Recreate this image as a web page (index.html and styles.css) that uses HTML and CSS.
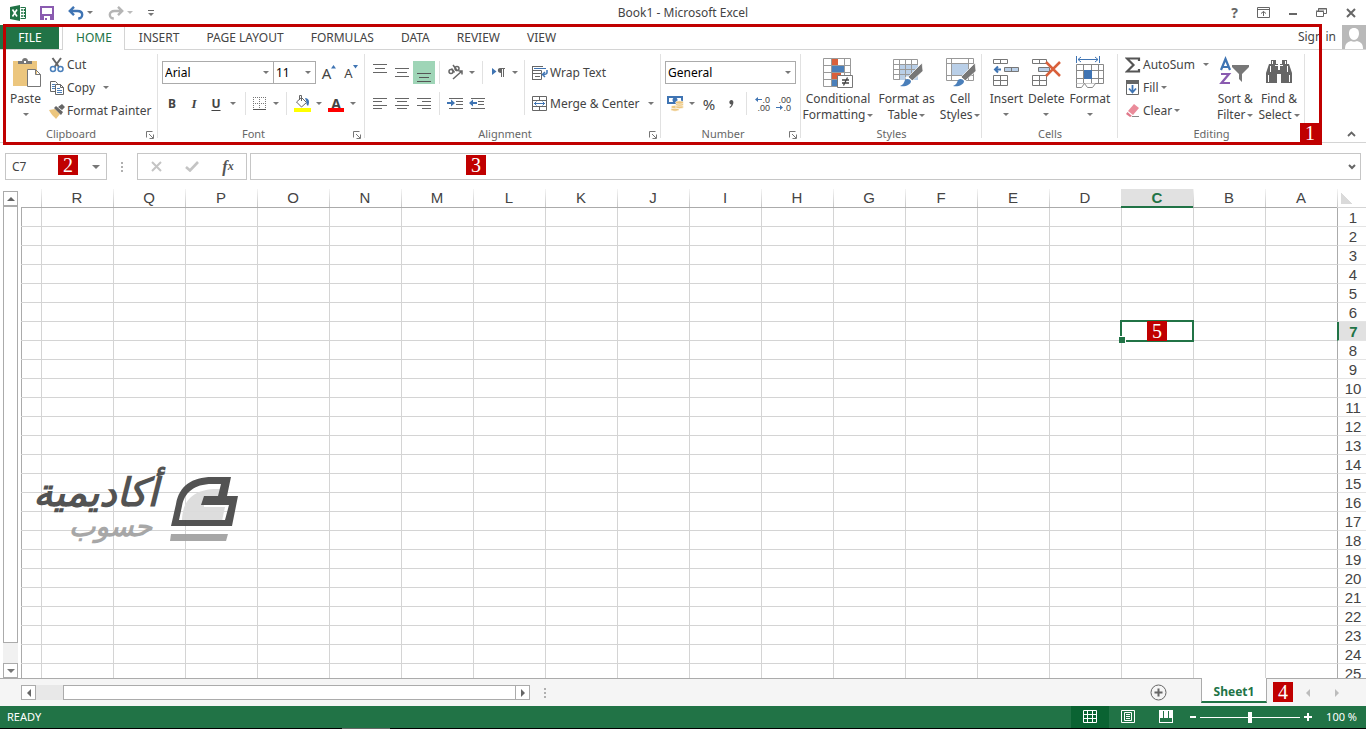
FILE: index.html
```html
<!DOCTYPE html>
<html lang="en">
<head>
<meta charset="utf-8">
<title>Book1 - Microsoft Excel</title>
<link rel="stylesheet" href="styles.css">
</head>
<body>
<header class="titlebar">
  <div class="quick">
    <svg class="app-icon" width="17" height="16" viewBox="0 0 17 16"><path fill="#217346" d="M0 2 10 0v16L0 14z"/><path fill="#fff" stroke="#217346" d="M10.500 2.500h5v11h-5"/><path stroke="#217346" stroke-dasharray="2 1" d="M12 4v8M14.500 4v8" stroke-width="1.500"/><path stroke="#fff" stroke-width="1.600" d="m2.500 4.500 4.500 7M7 4.500l-4.500 7"/></svg>
    <button class="q-btn q-save" aria-label="Save"><svg width="14" height="14" viewBox="0 0 14 14"><path fill="#8a5bb0" d="M0 0h14v14H0z"/><path fill="#fff" d="M2 2h10v6H2zM4 10h6v4H7v-2H5v2H4z"/></svg></button>
    <button class="q-btn" aria-label="Undo"><svg width="16" height="14" viewBox="0 0 16 14" fill="none" stroke="#3f74b3" stroke-width="2.400"><path d="M6 .8 1.800 5 6 9.200M2 5h7.500c3 0 4.700 1.600 4.700 3.800s-2 3.700-4 3.700"/></svg></button>
    <button class="drop" aria-label="Undo list"><i class="caret"></i></button>
    <button class="q-btn q-redo" aria-label="Redo"><svg width="16" height="14" viewBox="0 0 16 14" fill="none" stroke="#b5b5b5" stroke-width="2.400"><path d="M10 .8 14.200 5 10 9.200M14 5H6.500C3.500 5 1.800 6.600 1.800 8.800s2 3.700 4 3.700"/></svg></button>
    <button class="drop faded" aria-label="Redo list"><i class="caret"></i></button>
    <button class="drop q-custom" aria-label="Customize toolbar"><i class="dash"></i><i class="caret"></i></button>
  </div>
  <h1 class="title">Book1 - Microsoft Excel</h1>
  <div class="window-btns">
    <button aria-label="Help" class="help">?</button>
    <button aria-label="Ribbon display options"><svg width="13" height="11" viewBox="0 0 13 11" fill="none" stroke="#666"><path d="M.5.5h12v10H.5zM0 2.500h13M6.500 9V4.500M4 6.500l2.500-2L9 6.500"/></svg></button>
    <button aria-label="Minimize"><svg width="10" height="10"><path fill="#666" d="M1 5h8v2H1z"/></svg></button>
    <button aria-label="Restore"><svg width="11" height="9" viewBox="0 0 11 9" fill="none" stroke="#666"><path d="M.5 3.500h7v5h-7zM0 3h8M2.500 3V.5h8v5H8M2 1h9"/></svg></button>
    <button aria-label="Close"><svg width="10" height="10" viewBox="0 0 10 10" stroke="#666" stroke-width="2"><path d="m1 1 8 8M9 1 1 9"/></svg></button>
  </div>
</header>

<section class="ribbon">
  <nav class="tabs">
    <a class="tab file" href="#file">FILE</a>
    <a class="tab active" href="#home">HOME</a>
    <a class="tab" href="#insert">INSERT</a>
    <a class="tab" href="#layout">PAGE LAYOUT</a>
    <a class="tab" href="#formulas">FORMULAS</a>
    <a class="tab" href="#data">DATA</a>
    <a class="tab" href="#review">REVIEW</a>
    <a class="tab" href="#view">VIEW</a>
    <a class="signin" href="#signin">Sign in<svg width="24" height="24" viewBox="0 0 24 24"><path fill="#b9b9b9" d="M0 0h24v24H0z"/><path fill="#fff" d="M12 3c3.500 0 5 2.300 5 5.500S15 15 12 15s-5-3.300-5-6.500S8.500 3 12 3zM3 24c0-5 2-7 6-8 2 1 4 1 6 0 4 1 6 3 6 8z"/></svg></a>
  </nav>

  <div class="groups">
    <div class="group g-clipboard">
      <div class="body">
        <button class="big paste"><svg width="30" height="32" viewBox="0 0 30 32"><path fill="#ecc67e" d="M1 5h24v25H1z"/><path fill="#777" d="M6 8V5h4c0-4 6-4 6 0h4v3z"/><path fill="#fff" d="M12 5h2v2h-2z"/><path fill="#fff" stroke="#777" d="M15.500 13.500h8l5 5v12h-13zM23.500 13.500v5h5"/></svg><span>Paste</span><i class="caret"></i></button>
        <div class="stack">
          <button class="row-btn"><svg width="16" height="16" viewBox="0 0 16 16" fill="none"><path stroke="#666" stroke-width="2" d="m3.500 1 6.500 9M12 1 5.500 10"/><circle cx="4" cy="12" r="2.500" stroke="#4a7fba" stroke-width="1.500"/><circle cx="11.500" cy="12" r="2.500" stroke="#4a7fba" stroke-width="1.500"/></svg>Cut</button>
          <button class="row-btn"><svg width="16" height="16" viewBox="0 0 16 16"><path fill="#fff" stroke="#666" d="M1.500 1.500h5l2 2v8h-7z"/><path stroke="#4a7fba" d="M3 4.500h3M3 6.500h3M3 8.500h3"/><path fill="#fff" stroke="#666" d="M6.500 4.500h5l3 3v7h-8zM11.500 4.500v3h3"/><path stroke="#4a7fba" d="M8 8.500h3M8 10.500h5M8 12.500h5"/></svg>Copy<i class="caret far"></i></button>
          <button class="row-btn"><svg width="16" height="16" viewBox="0 0 16 16"><path fill="#ecc67e" d="m0 7 6-1 5 5-4 5C5 13 3 13 0 7z"/><path fill="#666" d="m5 5 2-2 7 6-2 3zM9 4l4-3 3 3-3 3z"/></svg>Format Painter</button>
        </div>
      </div>
      <footer>Clipboard<svg class="launch"><use href="#launch"/></svg></footer>
    </div>

    <div class="group g-font">
      <div class="body two">
        <div class="line combos">
          <label class="combo c-font"><select aria-label="Font"><option>Arial</option></select><i class="caret"></i></label>
          <label class="combo c-size"><select aria-label="Font size"><option>11</option></select><i class="caret"></i></label>
          <button class="icon-btn grow" aria-label="Increase font size">A<svg width="5" height="4"><path fill="#3f74b3" d="M0 3.500 2.500 0 5 3.500z"/></svg></button>
          <button class="icon-btn grow small" aria-label="Decrease font size">A<svg width="5" height="4"><path fill="#3f74b3" d="M0 0h5L2.500 3.500z"/></svg></button>
        </div>
        <div class="line">
          <button class="icon-btn bold">B</button><button class="icon-btn italic">I</button><button class="icon-btn under">U</button><button class="drop" aria-label="Underline styles"><i class="caret"></i></button>
          <i class="sep wide"></i>
          <button class="icon-btn" aria-label="Borders"><svg width="13" height="13" viewBox="0 0 13 13" fill="none" stroke="#777" stroke-dasharray="1 1"><path d="M0 .5h13M0 6.500h13M.5 0v13M6.500 0v13M12.500 0v13"/><path stroke-dasharray="none" stroke="#555" d="M0 12.500h13"/></svg></button><button class="drop" aria-label="Border styles"><i class="caret"></i></button>
          <i class="sep"></i>
          <button class="icon-btn" aria-label="Fill colour"><svg width="17" height="17" viewBox="0 0 17 17"><path fill="#fff" stroke="#666" d="m7.500 2.500 5 5-5 4.500-5-5zM5.500 5V.5h2V6"/><path fill="#3f74b3" d="M11 3c4 0 5 4 3 8-1-1-2-2-1.500-4z"/><path fill="#ff0" d="M0 13h17v4H0z"/></svg></button><button class="drop" aria-label="Fill colours"><i class="caret"></i></button>
          <button class="icon-btn fontcolor" aria-label="Font colour">A</button><button class="drop" aria-label="Font colours"><i class="caret"></i></button>
        </div>
      </div>
      <footer>Font<svg class="launch"><use href="#launch"/></svg></footer>
    </div>

    <div class="group g-align">
      <div class="body two-col">
        <div class="two">
          <div class="line">
            <button class="icon-btn" aria-label="Top align"><svg width="14" height="18" stroke="#666"><path d="M0 .5h14M2 4.500h10M0 8.500h14"/></svg></button><button class="icon-btn" aria-label="Middle align"><svg width="14" height="18" stroke="#666"><path d="M0 4.500h14M2 8.500h10M0 12.500h14"/></svg></button><button class="icon-btn pressed" aria-label="Bottom align"><svg width="14" height="18" stroke="#555"><path d="M0 9.500h14M2 13.500h10M0 17.500h14"/></svg></button>
            <i class="sep"></i>
            <button class="icon-btn" aria-label="Orientation"><svg width="17" height="17" viewBox="0 0 17 17" fill="none" stroke="#666" stroke-width="1.500"><circle cx="4" cy="7.500" r="2"/><path d="m4.500 4.500 3 4M6 1l4.500 6"/><circle cx="10" cy="4.500" r="2"/><path d="m6 15 9-8M11.500 7H15v3.500"/></svg></button><button class="drop" aria-label="Orientation list"><i class="caret"></i></button>
            <i class="sep"></i>
            <button class="icon-btn" aria-label="Text direction"><svg width="13" height="11" viewBox="0 0 13 11"><path fill="#3f74b3" d="m0 1 4.500 3.500L0 8z"/><path fill="#666" d="M8 1h5v1h-1v8h-1V2h-1v8H9V6C5 6 5 1 8 1z"/></svg></button><button class="drop" aria-label="Text directions"><i class="caret"></i></button>
          </div>
          <div class="line">
            <button class="icon-btn" aria-label="Align left"><svg width="14" height="11" stroke="#666"><path d="M0 .5h14M0 3.500h9M0 7.500h14M0 10.500h9"/></svg></button><button class="icon-btn" aria-label="Center"><svg width="14" height="11" stroke="#666"><path d="M0 .5h14M2 3.500h10M0 7.500h14M2 10.500h10"/></svg></button><button class="icon-btn" aria-label="Align right"><svg width="14" height="11" stroke="#666"><path d="M0 .5h14M5 3.500h9M0 7.500h14M5 10.500h9"/></svg></button>
            <i class="sep"></i>
            <button class="icon-btn" aria-label="Increase indent"><svg width="16" height="11" viewBox="0 0 16 11"><path stroke="#666" d="M2 .5h14M9 3.500h7M9 6.500h7M2 10.500h14"/><path fill="#3f74b3" d="M0 4h4V1.500L8 5 4 8.500V6H0z"/></svg></button><button class="icon-btn" aria-label="Decrease indent"><svg width="16" height="11" viewBox="0 0 16 11"><path stroke="#666" d="M2 .5h14M9 3.500h6M9 6.500h6M2 10.500h14"/><path fill="#3f74b3" d="M8 4H4V1.500L0 5l4 3.500V6h4z"/></svg></button>
          </div>
        </div>
        <i class="sep tall"></i>
        <div class="two">
          <button class="row-btn"><svg width="16" height="16" viewBox="0 0 16 16" fill="none"><path stroke="#666" d="M.5 1v14M0 1.500h11M.5 5.500h9v3h-9M.5 14.500h9v-6M3 11.500h5"/><path stroke="#3f74b3" d="M2 3.500h12" stroke-width="1"/><path stroke="#3f74b3" stroke-width="1.500" d="M15 5v2.500q0 2-4 2M13 7l-2.500 2.500L13 12"/></svg>Wrap Text</button>
          <button class="row-btn"><svg width="16" height="15" viewBox="0 0 16 15" fill="none"><path stroke="#666" d="M.5.5h14v14H.5zM0 4.500h15M0 10.500h15M7.500 1v3M7.500 11v3"/><path stroke="#3f74b3" d="M2 7.500h11M4.500 5.500l-2 2 2 2M10.500 5.500l2 2-2 2"/></svg>Merge &amp; Center<i class="caret far"></i></button>
        </div>
      </div>
      <footer>Alignment<svg class="launch"><use href="#launch"/></svg></footer>
    </div>

    <div class="group g-number">
      <div class="body two">
        <div class="line combos"><label class="combo c-num"><select aria-label="Number format"><option>General</option></select><i class="caret"></i></label></div>
        <div class="line">
          <button class="icon-btn" aria-label="Accounting format"><svg width="17" height="17" viewBox="0 0 17 17"><path fill="#3f74b3" d="M0 1h16v8H0z"/><path fill="#fff" d="M2 3h12v4H2z"/><circle cx="8" cy="5" r="2.500" fill="#3f74b3"/><g fill="#ecc67e" stroke="#fff" stroke-width=".6"><ellipse cx="8" cy="14.500" rx="4" ry="1.700"/><ellipse cx="8" cy="12" rx="4" ry="1.700"/><ellipse cx="12.500" cy="12" rx="4" ry="1.700"/><ellipse cx="12.500" cy="9.500" rx="4" ry="1.700"/><ellipse cx="12.500" cy="7.500" rx="4" ry="1.700"/></g></svg></button><button class="drop" aria-label="Currencies"><i class="caret"></i></button><button class="icon-btn percent">%</button><button class="icon-btn" aria-label="Comma style"><svg width="5" height="8" viewBox="0 0 5 8"><path fill="#555" d="M2.500 0C5 0 5.500 5 1 8L.5 7Q2.500 5.500 2.500 4.500C-.5 4.500-.3 0 2.500 0z"/></svg></button>
          <i class="sep"></i>
          <button class="icon-btn dec" aria-label="Increase decimal"><span><svg width="7" height="5"><use href="#arrow-l"/></svg>.0</span><span>.00</span></button><button class="icon-btn dec" aria-label="Decrease decimal"><span>.00</span><span><svg width="7" height="5"><use href="#arrow-r"/></svg>.0</span></button>
        </div>
      </div>
      <footer>Number<svg class="launch"><use href="#launch"/></svg></footer>
    </div>

    <div class="group g-styles">
      <div class="body bigs">
        <button class="big b-cond"><svg width="32" height="32" viewBox="0 0 32 32" fill="none"><path fill="#fff" stroke="#999" d="M1.500 2.500h27v28h-27zM1 9.500h27M1 16.500h27M1 23.500h27M9.500 2v28M22.500 2v28"/><path fill="#d9603b" d="M10 3h6v6h-6zM10 17h9v6h-9z"/><path fill="#4a7fba" d="M10 10h12v6H10zM10 24h5v6h-5z"/><path fill="#fff" stroke="#777" d="M15.500 19.500h15v12h-15z"/><path stroke="#444" stroke-width="1.300" d="M20 24h7M20 27h7M25.500 21.500l-4 8"/></svg><span>Conditional<br>Formatting<i class="caret"></i></span></button>
        <button class="big b-table"><svg width="32" height="32" viewBox="0 0 32 32" fill="none"><path fill="#fff" stroke="#999" d="M2.500 3.500h24v20h-24z"/><path fill="#b9cfe8" d="M8 9h19v15H8z"/><path stroke="#999" d="M2 8.500h25M2 13.500h25M2 18.500h25M8.500 3v21M14.500 3v21M20.500 3v21"/><use href="#brush"/></svg><span>Format as<br>Table<i class="caret"></i></span></button>
        <button class="big b-cell"><svg width="32" height="32" viewBox="0 0 32 32" fill="none"><path fill="#fff" stroke="#999" d="M2.500 2.500h27v22h-27zM2 7.500h27M2 19.500h27M7.500 2v22M24.500 2v22"/><path fill="#b9cfe8" d="M8 8h16v11H8z"/><use href="#brush"/></svg><span>Cell<br>Styles<i class="caret"></i></span></button>
      </div>
      <footer>Styles</footer>
    </div>

    <div class="group g-cells">
      <div class="body bigs">
        <button class="big"><svg width="28" height="32" viewBox="0 0 28 32" fill="none"><path fill="#fff" stroke="#777" d="M1.500 3.500h14v4h-14zM8.500 3v5M1.500 19.500h14v10h-14zM1 24.500h15M8.500 19v11"/><path fill="#b9cfe8" stroke="#777" d="M12.500 11.500h14v4h-14zM19.500 11v5"/><path stroke="#3f74b3" stroke-width="2" d="M9 13.500H3M6 10.500l-3 3 3 3"/></svg><span>Insert</span><i class="caret"></i></button>
        <button class="big"><svg width="30" height="32" viewBox="0 0 30 32" fill="none"><path fill="#fff" stroke="#777" d="M1.500 3.500h14v4h-14zM8.500 3v5M1.500 19.500h14v10h-14zM1 24.500h15M8.500 19v11"/><path fill="#b9cfe8" stroke="#777" d="M7.500 11.500h11v4h-11z"/><path stroke="#d9603b" stroke-width="2.500" d="m15 6 14 14M29 6 15 20"/></svg><span>Delete</span><i class="caret"></i></button>
        <button class="big"><svg width="30" height="32" viewBox="0 0 30 32" fill="none"><path stroke="#3f74b3" d="M1.500 0v7M24.500 0v7M3 3.500h20M6 1 3 3.500 6 6M20 1l3 2.500L20 6"/><path fill="#fff" stroke="#888" d="M1.500 8.500h27v19h-27zM1 14.500h28M1 22.500h28M8.500 8v19M16.500 8v19M23.500 8v19"/><path fill="#3f74b3" d="M9 14h8v9H9z"/><path fill="#fff" stroke="#888" d="M1.500 27.500v4h5l3-4 3 4h5l3-4"/></svg><span>Format</span><i class="caret"></i></button>
      </div>
      <footer>Cells</footer>
    </div>

    <div class="group g-edit">
      <div class="body">
        <div class="stack">
          <button class="row-btn"><svg width="16" height="16" viewBox="0 0 16 16" fill="none"><path stroke="#555" stroke-width="2.200" d="M14 4V1.500H2L8.500 8 2 14.500h12V12"/></svg>AutoSum<i class="caret far"></i></button>
          <button class="row-btn"><svg width="16" height="16" viewBox="0 0 16 16" fill="none"><path fill="#fff" stroke="#666" d="M1.500.5h12v14h-12z"/><path fill="#666" d="M1 0h13v4H1z"/><path stroke="#3f74b3" stroke-width="1.800" d="M7.500 5v7M4 8.500l3.500 4 3.500-4"/></svg>Fill<i class="caret"></i></button>
          <button class="row-btn"><svg width="16" height="16" viewBox="0 0 16 16"><path fill="#ea8b9a" d="m9 1 5 4-6 7-5-4z"/><path fill="#e0788a" d="m2.500 9 4.500 4-2 1-4-3z"/><path stroke="#888" d="M7 13.500h7"/></svg>Clear<i class="caret"></i></button>
        </div>
        <div class="bigs">
          <button class="big"><svg width="32" height="32" viewBox="0 0 32 32" fill="none"><path stroke="#3f74b3" stroke-width="2.200" d="m2 14 4.500-11L11 14M3.500 11h6"/><path stroke="#8a5bb0" stroke-width="2.200" d="M2 18h8L2.500 27H11"/><path fill="#777" d="M13 9h17v2l-7 7v8l-3-3v-5l-7-7z"/></svg><span>Sort &amp;<br>Filter<i class="caret"></i></span></button>
          <button class="big"><svg width="28" height="32" viewBox="0 0 28 32"><path fill="#666" d="M6 4h5v4h2v6h2V8h2V4h5v4h2l3 9v10H16v-9h-4v9H1V17l3-9h2z"/><path stroke="#fff" d="M7.500 5v3M20.500 5v3M5.500 10v6M22.500 10v6M3.500 19v7M24.500 19v7M10 9.500h3M15 9.500h3"/></svg><span>Find &amp;<br>Select<i class="caret"></i></span></button>
        </div>
      </div>
      <footer>Editing</footer>
    </div>
    <button class="collapse" aria-label="Collapse the ribbon"><svg width="9" height="6" fill="none" stroke="#666" stroke-width="1.800"><path d="m1 5 3.500-3.500L8 5"/></svg></button>
  </div>
  <div class="frame"><b class="mark">1</b></div>
</section>

<section class="formula-row">
  <div class="box namebox"><input aria-label="Name box" value="C7"><b class="mark">2</b><button class="drop" aria-label="Names"><i class="caret big-caret"></i></button></div>
  <i class="dots"></i>
  <div class="box fx">
    <button aria-label="Cancel"><svg width="11" height="11" stroke="#c4c4c4" stroke-width="2"><path d="m1 1 9 9M10 1l-9 9"/></svg></button>
    <button aria-label="Enter"><svg width="14" height="11" fill="none" stroke="#c4c4c4" stroke-width="2.600"><path d="m1 6 4 3.500L13 1"/></svg></button>
    <button class="fn" aria-label="Insert function">f<small>x</small></button>
  </div>
  <div class="box formula"><input aria-label="Formula bar"><b class="mark">3</b><button class="drop" aria-label="Expand formula bar"><svg width="8" height="6" fill="none" stroke="#666" stroke-width="2"><path d="m1 1 3 3 3-3"/></svg></button></div>
</section>

<main class="sheet-area">
  <div class="vscroll">
    <button aria-label="Scroll up"><i class="caret up big-caret"></i></button>
    <div class="vthumb"></div><div class="vtrack"></div>
    <button aria-label="Scroll down"><i class="caret big-caret"></i></button>
  </div>
  <div class="sheet">
    <table class="grid" dir="rtl"><thead></thead><tbody></tbody></table>
    <div class="watermark">
      <p lang="ar" dir="rtl"><span class="w1">أكاديمية</span><span class="w2">حسوب</span></p>
      <svg width="68" height="66" viewBox="0 0 68 66"><path fill="#dcdcdc" d="M12 43C13 24 24 13 47 13h6l-2 8H34v10h21l-3 14H12z"/><path fill="#4a4a4a" fill-rule="evenodd" d="M1 50 6 28C9 10 22 1 42 1h19l-4 19h11l-6 30zM9 44h46l4-15H31l3-9h14l3-12H42C24 8 14 17 12 30z"/><path fill="#a3a3a3" d="M1 58h57l-2 7H0z"/></svg>
    </div>
  </div>
</main>

<footer class="bottom">
  <div class="hscroll">
    <button aria-label="Scroll left"><i class="caret left big-caret"></i></button>
    <div class="htrack"></div><div class="hthumb"></div>
    <button aria-label="Scroll right"><i class="caret right big-caret"></i></button>
  </div>
  <i class="dots"></i>
  <button class="add" aria-label="New sheet"><svg width="17" height="17" viewBox="0 0 17 17" fill="none" stroke="#666"><circle cx="8.500" cy="8.500" r="7.500"/><path stroke-width="2" d="M8.500 4.500v8M4.500 8.500h8"/></svg></button>
  <a class="sheet-tab" href="#sheet1">Sheet1</a>
  <b class="mark">4</b>
  <button class="nav" aria-label="Previous sheets"><i class="caret left big-caret"></i></button>
  <button class="nav" aria-label="Next sheets"><i class="caret right big-caret"></i></button>
</footer>

<footer class="status">
  <span class="ready">READY</span>
  <button class="view on" aria-label="Normal view"><svg width="14" height="14" stroke="#fff" fill="none"><path d="M.5.5h13v12H.5zM0 4.500h14M0 8.500h14M4.500 0v13M9.500 0v13"/></svg></button>
  <button class="view" aria-label="Page layout view"><svg width="14" height="14" stroke="#fff" fill="none"><path d="M.5.5h13v12H.5zM3.500 2.500h7v8h-7zM5 4.500h4M5 6.500h4M5 8.500h4"/></svg></button>
  <button class="view" aria-label="Page break view"><svg width="14" height="14"><path fill="#fff" d="M0 0h14v13H0z"/><path fill="#217346" d="M1 8h12v4H1zM4 1h1v7H4zM9 1h1v7H9z"/></svg></button>
  <button class="zoom-btn" aria-label="Zoom out"><svg width="8" height="8"><path fill="#fff" d="M1 3h6v2H1z"/></svg></button>
  <input class="zoom" type="range" min="0" max="100" value="50" aria-label="Zoom">
  <button class="zoom-btn" aria-label="Zoom in"><svg width="8" height="8"><path fill="#fff" d="M0 3h8v2H0zM3 0h2v8H3z"/></svg></button>
  <span class="pct">100 %</span>
</footer>
<div class="edge"></div>

<svg class="defs" width="0" height="0"><defs>
  <g id="launch"><path fill="none" stroke="#777" d="M.5 6.500v-6h6M3 3l4 4M7.500 3.500v4h-4"/></g>
  <g id="arrow-l"><path fill="#3f74b3" d="M0 2.500 3 0v2h4v1H3v2z"/></g>
  <g id="arrow-r"><path fill="#3f74b3" d="M7 2.500 4 0v2H0v1h4v2z"/></g>
  <g id="brush"><path fill="#777" stroke="#fff" stroke-width=".7" d="m31 7 1 8-11 10-4-4z"/><path fill="#fff" d="m16 20 6 5-2 2-6-5z"/><path fill="#4a7fba" d="M9 30c3-1 4-3 5-6 2-2 5-1 6 1 0 4-6 6-11 5z"/></g>
</defs></svg>
<script src="grid.js"></script>
</body>
</html>
```

FILE: styles.css
```css
* { box-sizing: border-box; }
body { margin: 0; height: 100vh; display: flex; flex-direction: column; overflow: hidden; background: #fff; color: #444; font: 12px/16px "Noto Sans", "Open Sans", sans-serif; }
button, input, select { font: inherit; color: inherit; border: 0; padding: 0; margin: 0; background: none; }
button { display: inline-flex; align-items: center; justify-content: center; }
a { color: inherit; text-decoration: none; }
svg { flex: none; display: block; }
.defs { position: absolute; }

.caret { flex: none; display: inline-block; width: 0; height: 0; border: 3px solid transparent; border-top-color: #777; border-bottom: 0; vertical-align: middle; }
.big-caret { border-width: 4px; border-bottom: 0; }
.caret.up { border: 4px solid transparent; border-bottom-color: #666; border-top: 0; }
.caret.left { border: 4px solid transparent; border-right-color: #666; border-left: 0; }
.caret.right { border: 4px solid transparent; border-left-color: #666; border-right: 0; }
.drop { width: 12px; height: 22px; }
.mark { width: 20px; height: 20px; background: #c00000; color: #fff; font: 20px/20px "Liberation Serif", serif; text-align: center; }

.titlebar { height: 25px; flex: none; display: grid; grid-template-columns: 1fr auto 1fr; align-items: center; }
.quick { display: flex; align-items: center; height: 22px; padding-left: 10px; }
.q-btn { width: 16px; height: 22px; }
.q-save { margin: 0 13px 0 12px; }
.q-redo { margin-left: 12px; }
.faded { opacity: .5; }
.q-custom { flex-direction: column; gap: 2px; margin-left: 9px; }
.dash { width: 6px; height: 1px; background: #666; }
.title { margin: 0; font-size: 12px; font-weight: 400; }
.window-btns { display: flex; justify-content: flex-end; padding-right: 1px; }
.window-btns button { width: 29px; height: 22px; }
.window-btns .help { font-size: 14px; font-weight: 700; color: #666; }

.ribbon { position: relative; flex: none; }
.tabs { display: flex; height: 25px; border-bottom: 1px solid #d4d4d4; }
.tab { padding: 0 13px 0 14px; line-height: 25px; white-space: nowrap; }
.file { background: #217346; color: #fff; width: 59px; text-align: center; margin-right: 3px; }
.active { height: 25px; background: #fff; border: 1px solid #d4d4d4; border-width: 0 1px; color: #217346; padding: 0 12px 0 13px; }
.signin { margin-left: auto; display: flex; align-items: center; gap: 6px; }

.groups { display: flex; height: 93px; border-bottom: 1px solid #d4d4d4; }
.group { position: relative; flex: none; display: flex; flex-direction: column; }
.group::after { content: ""; position: absolute; top: 4px; bottom: 4px; right: 0; width: 1px; background: #e1e1e1; }
.body { flex: 1; display: flex; }
.group footer { height: 17px; line-height: 18px; text-align: center; position: relative; font-size: 11px; color: #666; padding-right: 16px; }
.launch { position: absolute; right: 4px; top: 6px; width: 8px; height: 8px; }
.g-clipboard { width: 158px; }
.g-font { width: 207px; }
.g-align { width: 296px; }
.g-number { width: 140px; }
.g-styles { width: 181px; }
.g-cells { width: 136px; }
.g-edit { width: 187px; }
.g-styles footer, .g-cells footer, .g-edit footer { padding-right: 0; }

.stack { display: flex; flex-direction: column; padding-top: 3px; }
.row-btn { height: 23px; justify-content: flex-start; gap: 2px; white-space: nowrap; }
.far { margin-left: 6px; }
.big { flex-direction: column; justify-content: flex-start; padding: 6px 0 0; white-space: nowrap; line-height: 16px; }
.big > span { margin-top: 3px; }
.big > .caret { margin-top: 6px; }
.big span .caret { margin-left: 2px; }
.bigs { display: flex; justify-content: center; gap: 5px; }
.paste { margin: 0 7px 0 9px; }
.g-clipboard .paste svg { margin-left: 3px; }

.two { display: flex; flex-direction: column; gap: 8px; padding: 11px 3px 0; }
.two-col { padding-left: 1px; }
.line { display: flex; align-items: center; height: 23px; }
.icon-btn { width: 22px; height: 23px; position: relative; }
.pressed { background: #9fd5b7; }
.sep { width: 1px; height: 23px; margin: 0 4px; background: #e1e1e1; }
.sep.wide { margin-left: 6px; margin-right: 2px; }
.sep.tall { height: 55px; margin: 10px 4px 0 0; }
.combo { position: relative; display: flex; height: 23px; border: 1px solid #ababab; background: #fff; color: #000; }
.combo select { appearance: none; width: 100%; padding: 0 2px; }
.combo .caret { position: absolute; right: 4px; top: 9px; }
.combos { padding-left: 1px; }
.c-font { width: 112px; }
.c-size { width: 43px; margin: 0 2px 0 -1px; }
.c-num { width: 131px; }
.grow { font-size: 15px; }
.grow svg { align-self: flex-start; margin-top: 4px; }
.grow.small { font-size: 13px; }
.bold { font-weight: 700; }
.italic { font: italic 700 13px "Liberation Serif", serif; }
.under { font-weight: 700; text-decoration: underline; text-underline-offset: 2px; }
.fontcolor { font-size: 14px; font-weight: 700; line-height: 14px; }
.fontcolor::after { content: ""; position: absolute; left: 3px; right: 3px; bottom: 3px; height: 4px; background: #f00; }
.percent { font-size: 15px; }
.icon-btn.dec { flex-direction: column; align-items: flex-end; width: 21px; padding-right: 2px; font: 9px/8px "Liberation Sans", Arial, sans-serif; }
.dec span { display: flex; align-items: center; }
.g-edit .body { padding-left: 7px; gap: 8px; }
.collapse { width: 16px; height: 16px; margin: auto 7px 0 auto; }
.frame { position: absolute; inset: -1px 44px -2px 3px; border: 3px solid #c00000; pointer-events: none; }
.frame .mark { position: absolute; right: -1px; bottom: -1px; }

.formula-row { flex: none; display: flex; align-items: center; height: 46px; padding: 10px 5px 9px; }
.box { height: 27px; display: flex; align-items: center; border: 1px solid #c6c6c6; }
.namebox { width: 102px; padding-left: 6px; }
.namebox input { width: 46px; }
.namebox .mark { margin-bottom: 3px; }
.namebox .drop { margin-left: 12px; }
.dots { width: 2px; height: 10px; margin: 0 14px; background: repeating-linear-gradient(#b0b0b0 0 2px, transparent 2px 4px); }
.fx { width: 110px; margin-right: 3px; }
.fx button { flex: 1; height: 25px; }
.fx .fn { font: italic 700 16px "Liberation Serif", serif; color: #555; }
.fn small { font-size: 12px; }
.formula { flex: 1; position: relative; }
.formula input { flex: 1; height: 25px; padding: 0 6px; }
.formula .mark { position: absolute; left: 215px; top: 1px; }
.formula .drop { width: 16px; }

.sheet-area { flex: 1; min-height: 0; display: flex; padding-left: 3px; }
.vscroll { width: 15px; margin-right: 3px; padding-top: 2px; display: flex; flex-direction: column; }
.vscroll button, .hscroll button { flex: none; width: 15px; height: 15px; border: 1px solid #ababab; background: #fff; }
.vthumb { flex: 1; border: 1px solid #ababab; }
.vtrack { height: 20px; background: #f1f1f1; }
.sheet { flex: 1; position: relative; overflow: hidden; }
.sheet::before { content: ""; position: absolute; left: 0; top: 18px; bottom: 0; width: 1px; background: #ababab; }
.grid { width: 100%; table-layout: fixed; border-collapse: separate; border-spacing: 0; font: 15px/18px "Liberation Sans", Arial, sans-serif; }
.grid th, .grid td { height: 19px; padding: 0; text-align: center; font-weight: 400; border-bottom: 1px solid #d4d4d4; }
.grid td { border-left: 1px solid #d4d4d4; position: relative; }
.grid tr > :last-child { border-left: 0; }
.grid thead th { width: 72px; border-bottom-color: #ababab; background: linear-gradient(#f4f4f4, #c8c8c8) left / 1px 100% no-repeat; }
.grid thead th:last-child { width: auto; background: none; }
.grid .corner { width: 29px; background: linear-gradient(to top right, #dadada 50%, transparent 50%) 4px 4px / 11px 11px no-repeat, linear-gradient(#f4f4f4, #c8c8c8) left / 1px 100% no-repeat; border-bottom-color: #d4d4d4; }
.grid tbody th { border-left: 1px solid #ababab; border-bottom: 1px solid #e4e4e4; padding: 2px 0 0 2px; line-height: 16px; }
.grid thead th.picked { color: #217346; font-weight: 700; border-bottom: 2px solid #217346; background: #e1e1e1; line-height: 17px; }
.grid tbody th.picked { color: #217346; font-weight: 700; border-left: 2px solid #217346; background: #e1e1e1; }
.cursor { position: absolute; inset: -2px -1px -2px -2px; border: 2px solid #217346; display: flex; align-items: center; justify-content: center; z-index: 1; }
.cursor::after { content: ""; position: absolute; left: -3px; bottom: -3px; width: 6px; height: 6px; background: #217346; border: 1px solid #fff; border-width: 1px 1px 0 0; }
.watermark { position: absolute; left: 3px; top: 287px; display: flex; gap: 12px; opacity: .95; }
.watermark p { margin: 0; width: 134px; font: italic 700 39px/34px "DejaVu Sans", sans-serif; color: #4a4a4a; white-space: nowrap; }
.watermark span { display: block; }
.watermark .w2 { font-size: 28px; line-height: 34px; padding-right: 6px; color: #a3a3a3; }

.bottom { flex: none; display: flex; align-items: center; height: 28px; background: #f5f5f5; border-top: 1px solid #ababab; padding-left: 21px; }
.hscroll { display: flex; width: 509px; }
.htrack { width: 27px; background: #e8e8e8; }
.hthumb { flex: 1; border: 1px solid #ababab; background: #fff; margin-right: -1px; }
.add { width: 22px; height: 22px; margin: 0 32px 0 auto; }
.sheet-tab { align-self: flex-start; width: 66px; height: 25px; margin: -1px 6px 0 0; background: #fff; border: 1px solid #ababab; border-top: 0; border-bottom: 2px solid #217346; color: #217346; font-weight: 700; line-height: 27px; text-align: center; }
.nav { width: 29px; height: 20px; opacity: .4; }
.bottom .mark { margin-bottom: 2px; }
.bottom .nav:last-child { margin-right: 15px; }

.status { flex: none; display: flex; align-items: center; height: 22px; padding: 0 9px 0 7px; background: #217346; color: #fff; font-size: 11px; }
.ready { margin-right: auto; }
.view { width: 38px; height: 22px; }
.on { background: #0a6332; }
.zoom-btn { width: 15px; height: 22px; }
.zoom { appearance: none; width: 100px; height: 12px; background: linear-gradient(#fff, #fff) center / 100% 1px no-repeat; }
.zoom::-webkit-slider-thumb { appearance: none; width: 4px; height: 11px; background: #fff; }
.pct { width: 42px; text-align: right; }
.edge { flex: none; height: 1px; background: linear-gradient(#666, #666) 342px 0 / 48px 1px no-repeat #000; }
```

FILE: grid.js
```js
const columns = [..."ABCDEFGHIJKLMNOPQR", ""];
const rowCount = 25;
const picked = { column: "C", row: 7 };

const head = document.querySelector(".grid thead").insertRow();
head.innerHTML = '<th class="corner"></th>' + columns
  .map(c => `<th${c === picked.column ? ' class="picked"' : ""}>${c}</th>`).join("");

const body = document.querySelector(".grid tbody");
for (let r = 1; r <= rowCount; r++) {
  const isRow = r === picked.row;
  body.insertRow().innerHTML = `<th${isRow ? ' class="picked"' : ""}>${r}</th>` + columns
    .map(c => isRow && c === picked.column
      ? '<td><div class="cursor"><b class="mark">5</b></div></td>'
      : "<td></td>").join("");
}
```
